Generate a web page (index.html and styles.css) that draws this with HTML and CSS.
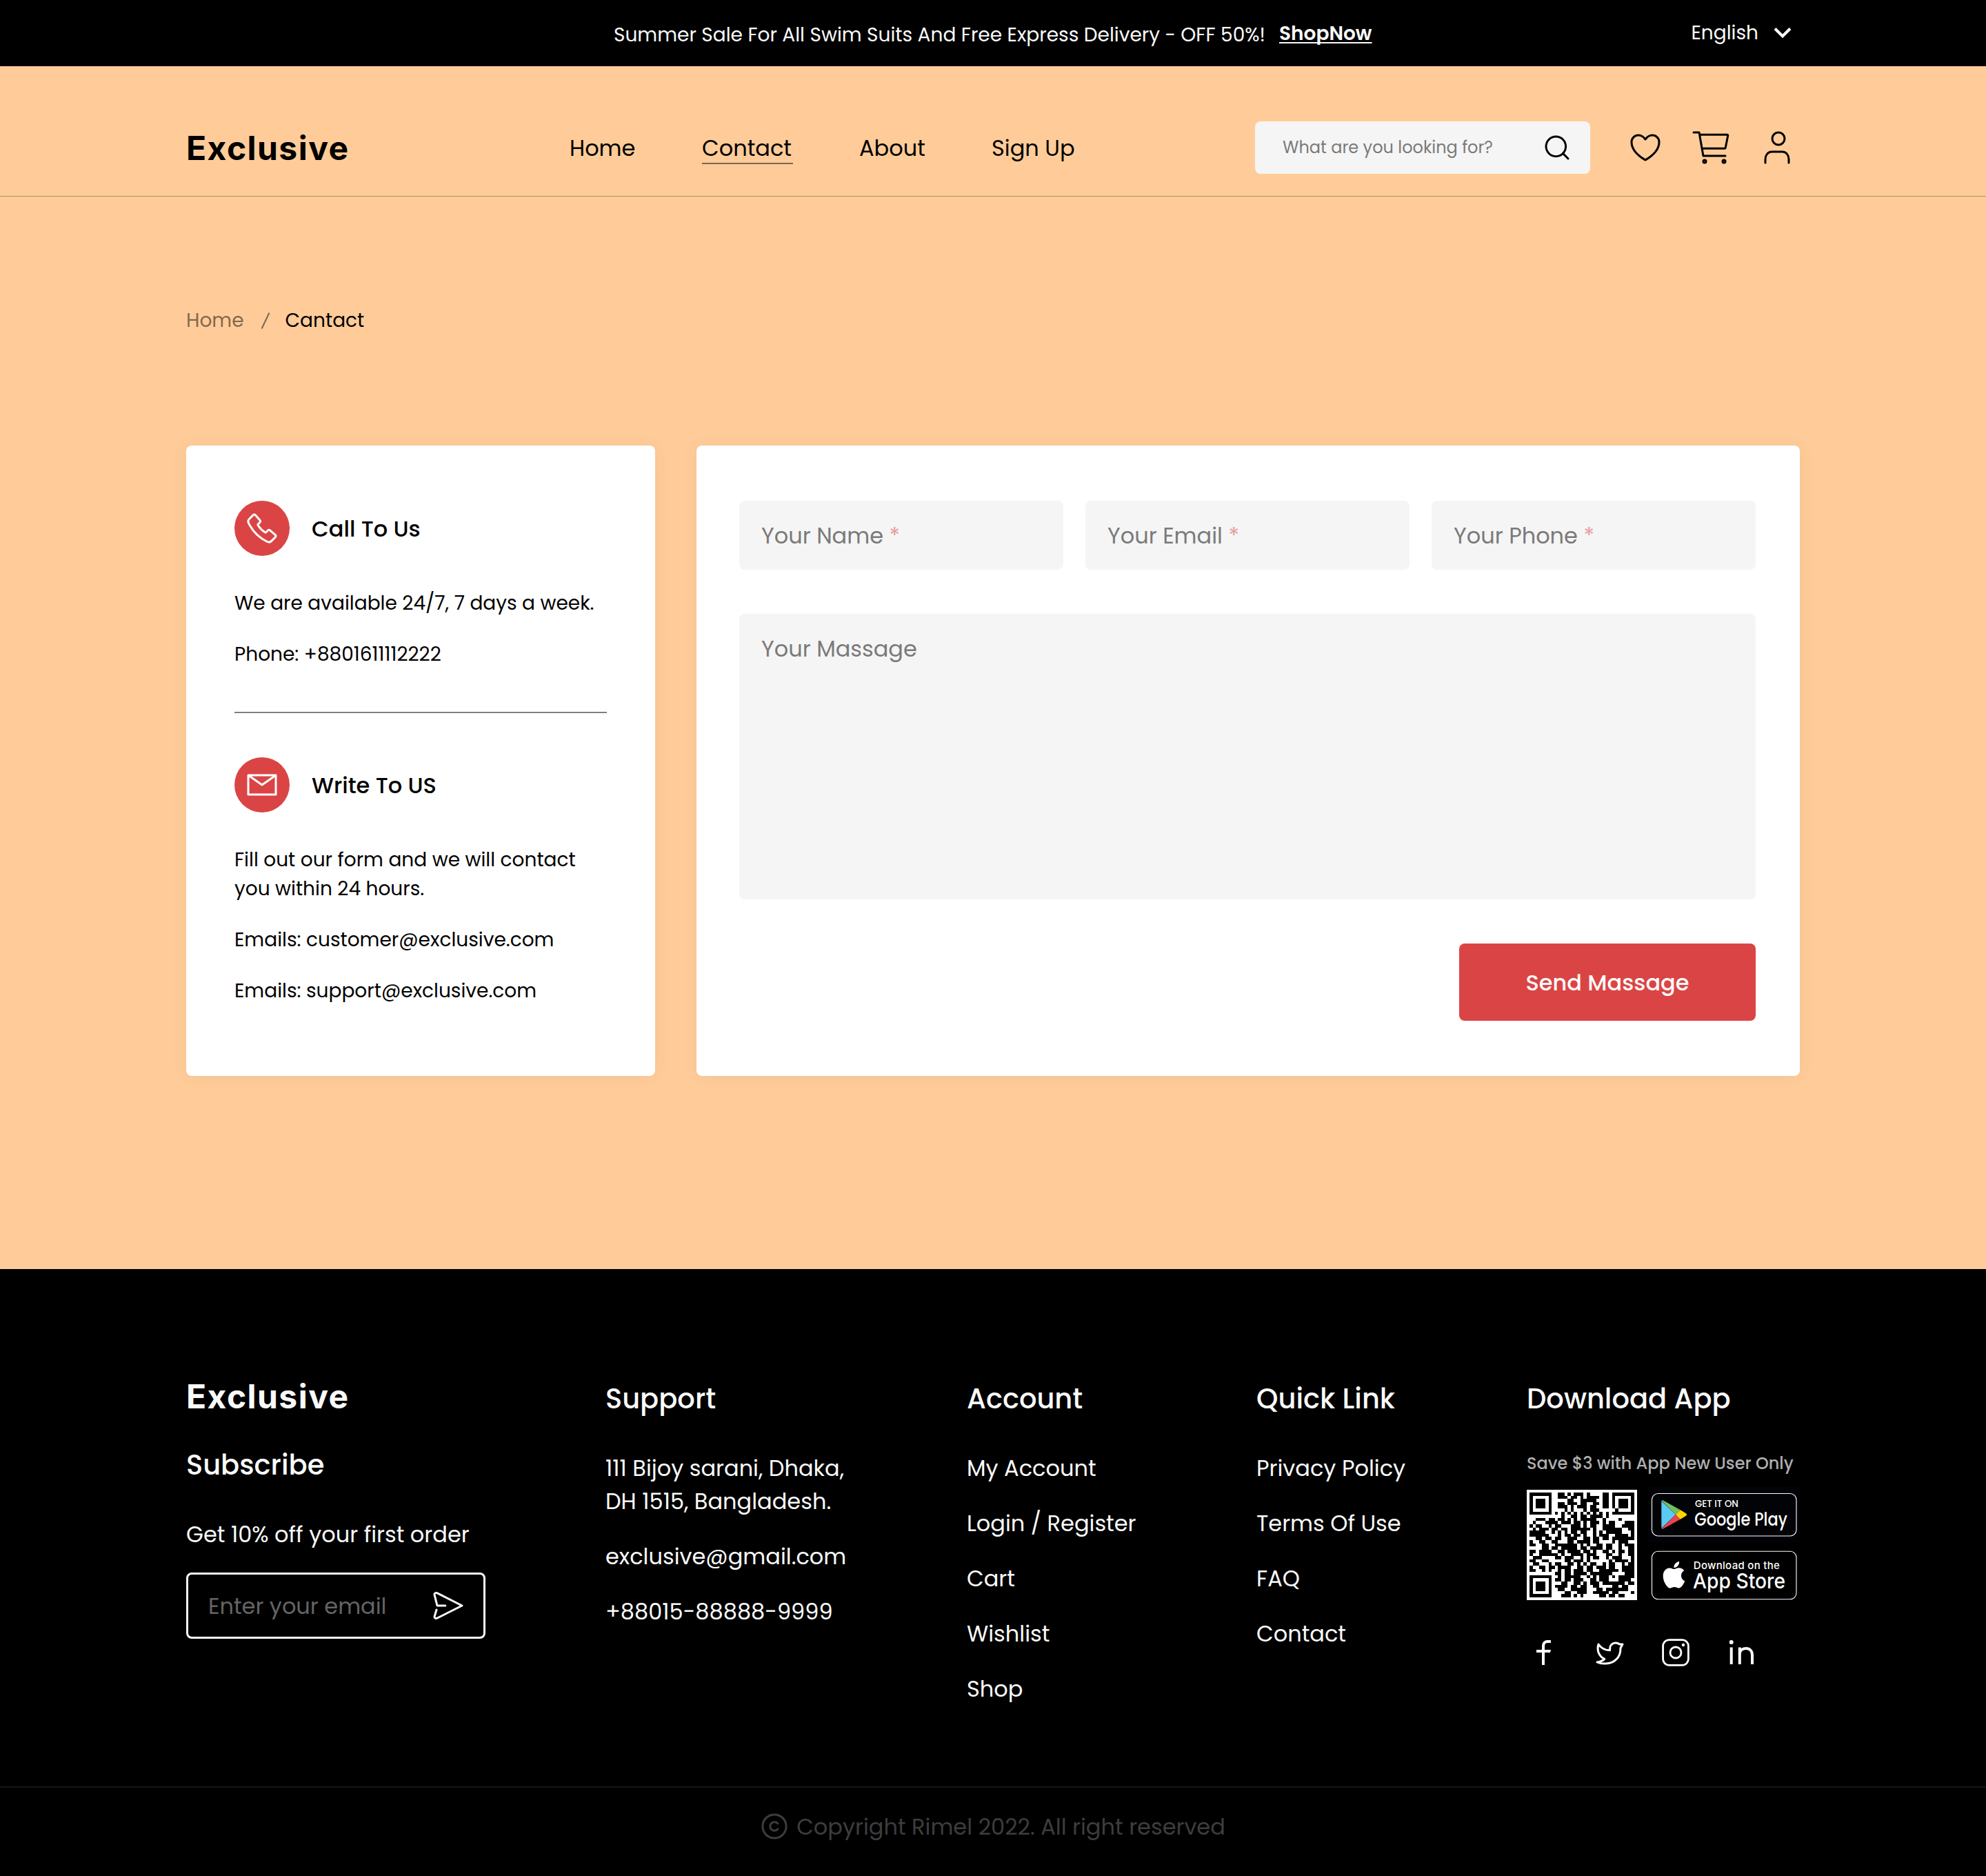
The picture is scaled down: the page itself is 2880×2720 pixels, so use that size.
FILE: index.html
```html
<!DOCTYPE html>
<html lang="en">
<head>
<meta charset="utf-8">
<title>Exclusive - Contact</title>
<link rel="stylesheet" href="styles.css">
</head>
<body>
<div class="topbar">
  <p class="promo">Summer Sale For All Swim Suits And Free Express Delivery - OFF 50%!</p>
  <a class="shop-now">ShopNow</a>
  <div class="language">
    <span>English</span>
    <svg class="icon-24" viewBox="0 0 24 24" fill="none" stroke="#fff" stroke-width="2.1"><path d="M7 8.8L12.5 14.2L18 8.8"/></svg>
  </div>
</div>

<header class="header">
  <a class="logo">Exclusive</a>
  <nav class="nav">
    <a class="t16">Home</a>
    <a class="t16 active">Contact</a>
    <a class="t16">About</a>
    <a class="t16">Sign Up</a>
  </nav>
  <div class="tools">
    <div class="search">
      <span>What are you looking for?</span>
      <svg class="icon-24" viewBox="0 0 24 24" fill="none" stroke="#000" stroke-width="1.5" stroke-linecap="round"><circle cx="11.158" cy="11.158" r="7.158"/><path d="M20 20L16.222 16.216"/></svg>
    </div>
    <div class="icons">
      <svg class="icon-32" viewBox="0 0 32 32" fill="none" stroke="#000" stroke-width="1.5" stroke-linecap="round" stroke-linejoin="round"><path d="M11 7C8.239 7 6 9.216 6 11.95C6 14.157 6.875 19.395 15.488 24.69C15.642 24.784 15.819 24.834 16 24.834C16.181 24.834 16.358 24.784 16.512 24.69C25.125 19.395 26 14.157 26 11.95C26 9.216 23.761 7 21 7C18.239 7 16 10 16 10C16 10 13.761 7 11 7Z"/></svg>
      <svg class="icon-32" viewBox="0 0 32 32" fill="none" stroke="#000" stroke-width="1.5" stroke-linecap="round" stroke-linejoin="round"><circle cx="11" cy="26" r="1"/><circle cx="25" cy="26" r="1"/><path d="M3 5H7L10 22H26"/><path d="M10 16.667H25.59C25.83 16.667 26.034 16.5 26.081 16.265L27.881 7.265C27.942 6.955 27.706 6.667 27.39 6.667H8"/></svg>
      <svg class="icon-32" viewBox="0 0 32 32" fill="none" stroke="#000" stroke-width="1.5" stroke-linecap="round" stroke-linejoin="round"><path d="M24 27V24.333C24 22.919 23.522 21.562 22.672 20.562C21.822 19.562 20.669 19 19.467 19H11.533C10.331 19 9.178 19.562 8.328 20.562C7.478 21.562 7 22.919 7 24.333V27"/><circle cx="16.5" cy="9.5" r="4.5"/></svg>
    </div>
  </div>
</header>

<main class="main">
  <div class="breadcrumb">
    <a class="crumb">Home</a>
    <svg class="slash" viewBox="0 0 14 24" stroke="#000" stroke-opacity=".5" stroke-width="2"><path d="M1.5 23.5L12.5 .5"/></svg>
    <span>Cantact</span>
  </div>

  <div class="contact">
    <section class="card info">
      <div class="info-head">
        <svg class="badge" viewBox="0 0 40 40" fill="none"><circle cx="20" cy="20" r="20" fill="#DB4444"/><path stroke="#fff" stroke-width="1.5" stroke-linecap="round" stroke-linejoin="round" d="M18.554 14.24L15.171 10.335C14.781 9.885 14.066 9.887 13.613 10.341L10.831 13.128C10.003 13.957 9.766 15.188 10.245 16.175C13.107 22.1 17.885 26.885 23.806 29.755C24.792 30.234 26.022 29.997 26.85 29.168L29.658 26.355C30.113 25.9 30.114 25.181 29.66 24.791L25.74 21.426C25.33 21.074 24.693 21.12 24.282 21.532L22.918 22.898C22.774 23.043 22.548 23.081 22.365 22.986C20.136 21.702 18.286 19.85 17.005 17.619C16.909 17.436 16.947 17.209 17.093 17.065L18.453 15.704C18.865 15.29 18.91 14.65 18.554 14.239Z"/></svg>
        <h2 class="t16 medium">Call To Us</h2>
      </div>
      <div class="info-body">
        <p>We are available 24/7, 7 days a week.</p>
        <p>Phone: +8801611112222</p>
      </div>
      <hr class="rule">
      <div class="info-head">
        <svg class="badge" viewBox="0 0 40 40" fill="none"><circle cx="20" cy="20" r="20" fill="#DB4444"/><path stroke="#fff" stroke-width="1.5" stroke-linecap="round" stroke-linejoin="round" d="M10 13L20 20L30 13M10 27H30V13H10V27Z"/></svg>
        <h2 class="t16 medium">Write To US</h2>
      </div>
      <div class="info-body">
        <p>Fill out our form and we will contact you within 24 hours.</p>
        <p>Emails: customer@exclusive.com</p>
        <p>Emails: support@exclusive.com</p>
      </div>
    </section>

    <form class="card form">
      <div class="fields">
        <label class="field"><span class="t16">Your Name <i>*</i></span></label>
        <label class="field"><span class="t16">Your Email <i>*</i></span></label>
        <label class="field"><span class="t16">Your Phone <i>*</i></span></label>
      </div>
      <label class="field message"><span class="t16">Your Massage</span></label>
      <button type="button" class="send"><span class="t16 medium">Send Massage</span></button>
    </form>
  </div>
</main>

<footer class="footer">
  <div class="columns">
    <div class="col subscribe">
      <a class="logo">Exclusive</a>
      <h3>Subscribe</h3>
      <p class="t16 offer">Get 10% off your first order</p>
      <div class="email">
        <span class="t16">Enter your email</span>
        <svg class="icon-24" viewBox="0 0 24 24" fill="none" stroke="#FAFAFA" stroke-width="1.5" stroke-linecap="round" stroke-linejoin="round"><path d="M9.912 12H4L2.023 4.135C2.01 4.089 2.003 4.042 2 3.995C1.972 3.074 2.986 2.436 3.864 2.858L22 12L3.864 21.142C2.996 21.559 1.994 20.941 2 20.035C2.003 19.954 2.017 19.874 2.042 19.797L3.5 15"/></svg>
      </div>
    </div>
    <div class="col support">
      <h3>Support</h3>
      <ul>
        <li class="t16">111 Bijoy sarani, Dhaka,<br>DH 1515, Bangladesh.</li>
        <li class="t16">exclusive@gmail.com</li>
        <li class="t16">+88015-88888-9999</li>
      </ul>
    </div>
    <div class="col account">
      <h3>Account</h3>
      <ul>
        <li class="t16">My Account</li>
        <li class="t16">Login / Register</li>
        <li class="t16">Cart</li>
        <li class="t16">Wishlist</li>
        <li class="t16">Shop</li>
      </ul>
    </div>
    <div class="col quick">
      <h3>Quick Link</h3>
      <ul>
        <li class="t16">Privacy Policy</li>
        <li class="t16">Terms Of Use</li>
        <li class="t16">FAQ</li>
        <li class="t16">Contact</li>
      </ul>
    </div>
    <div class="col download">
      <h3>Download App</h3>
      <p class="save">Save $3 with App New User Only</p>
      <div class="apps">
        <svg id="qr" class="qr" viewBox="-.87 -.87 34.74 34.74" shape-rendering="crispEdges"></svg>
        <div class="stores">
          <svg class="store" viewBox="0 0 220 80">
            <rect width="220" height="80" fill="#020306"/>
            <rect x="5.5" y="9.5" width="209.5" height="61.5" rx="9" fill="#020306" stroke="#fff" stroke-width="1.1"/>
            <path fill="#5BC9F4" d="M19.3 20V60L40 40Z"/>
            <path fill="#71BF65" d="M19.5 19.6Q20.3 18.6 22 19.5L46.8 33.3L40 40Z"/>
            <path fill="#E8434F" d="M19.5 60.4Q20.3 61.4 22 60.5L46.8 46.7L40 40Z"/>
            <path fill="#FFD400" d="M46.8 33.3L55 38.3Q57 40 55 41.7L46.8 46.7L40 40Z"/>
            <text x="68" y="29" class="small-label google" textLength="63" lengthAdjust="spacingAndGlyphs">GET IT ON</text>
            <text x="67.3" y="56.2" class="big-label google" textLength="134.5" lengthAdjust="spacingAndGlyphs">Google Play</text>
          </svg>
          <svg class="store" viewBox="0 0 220 80">
            <rect x="5.5" y="5.2" width="209.5" height="69.6" rx="9" fill="#000" stroke="#fff" stroke-width="1.1"/>
            <path fill="#fff" transform="translate(18.1 20) scale(1.612)" d="M12.152 6.896c-.948 0-2.415-1.078-3.96-1.04-2.04.027-3.91 1.183-4.961 3.014-2.117 3.675-.546 9.103 1.519 12.09 1.013 1.454 2.208 3.09 3.792 3.039 1.52-.065 2.09-.987 3.935-.987 1.831 0 2.35.987 3.96.948 1.637-.026 2.676-1.48 3.676-2.948 1.156-1.688 1.636-3.325 1.662-3.415-.039-.013-3.182-1.221-3.22-4.857-.026-3.04 2.48-4.494 2.597-4.559-1.429-2.09-3.623-2.324-4.39-2.376-2-.156-3.675 1.09-4.61 1.09zM15.53 3.83c.843-1.012 1.4-2.427 1.245-3.83-1.207.052-2.662.805-3.532 1.818-.78.896-1.454 2.338-1.273 3.714 1.338.104 2.715-.688 3.559-1.701"/>
            <text x="65.8" y="30.8" class="small-label apple" textLength="125" lengthAdjust="spacing">Download on the</text>
            <text x="65" y="58.8" class="big-label apple" textLength="134" lengthAdjust="spacingAndGlyphs">App Store</text>
          </svg>
        </div>
      </div>
      <div class="social">
        <svg class="icon-24" viewBox="0 0 24 24" fill="#fff"><path d="M13 10H17.5L17 12H13V21H11V12H7V10H11V8.128C11 6.345 11.186 5.698 11.534 5.046C11.876 4.402 12.402 3.875 13.046 3.534C13.698 3.186 14.345 3 16.128 3C16.65 3 17.108 3.05 17.5 3.15V5H16.128C14.804 5 14.401 5.078 13.99 5.298C13.686 5.46 13.46 5.686 13.298 5.99C13.078 6.401 13 6.804 13 8.128V10Z"/></svg>
        <svg class="icon-24" viewBox="0 0 24 24" fill="none" stroke="#fff" stroke-width="1.5" stroke-linejoin="round"><path d="M16.4 5C14.1 5 12.3 6.8 12.3 9V10.4C9 10.4 6 8.8 4 6C2.7 10.2 4.1 14.6 8.4 16.7C6.8 18.2 5 18.8 3 19C5 19.9 7.2 20.1 9.2 20C15.4 19.8 20 15.6 20 9.2V8.7L21.5 6H19.3C18.6 5.4 17.6 5 16.4 5Z"/></svg>
        <svg class="icon-24" viewBox="0 0 24 24" fill="none" stroke="#fff" stroke-width="1.4"><rect x="2.8" y="2.8" width="18.4" height="18.4" rx="4.4"/><circle cx="12" cy="12" r="4"/><circle cx="17.5" cy="6.5" r="1.1" fill="#fff" stroke="none"/></svg>
        <svg class="icon-24" viewBox="0 0 24 24" fill="none" stroke="#fff" stroke-width="2"><circle cx="4.35" cy="4.5" r="1.5" fill="#fff" stroke="none"/><path d="M4.35 8.3V20.5M10.4 20.5V8.3M10.4 13.4C10.4 10.6 12.3 9 14.9 9C17.7 9 19.5 10.8 19.5 13.8V20.5"/></svg>
      </div>
    </div>
  </div>
  <div class="copyright">
    <svg class="icon-20" viewBox="0 0 40 40" fill="none" stroke="#3D3D3D" stroke-width="3"><circle cx="20" cy="20" r="17.1"/><path stroke-linecap="round" d="M25 16.1A6.3 6.3 0 1 0 25 23.9"/></svg>
    <p class="t16">Copyright Rimel 2022. All right reserved</p>
  </div>
</footer>
<script src="qr.js"></script>
</body>
</html>
```

FILE: styles.css
```css
* { box-sizing: border-box; margin: 0; padding: 0; }

body {
  width: 2880px;
  background: #FFCC99;
  color: #000;
  font: 400 28px/42px Poppins, Inter, sans-serif;
}

svg { display: block; flex: none; }
ul { list-style: none; }
i { font-style: normal; }

.t16 { display: block; font-size: 32px; line-height: 48px; font-weight: 400; padding-top: 1px; margin-bottom: -1px; white-space: nowrap; }
.medium { font-weight: 500; }

.icon-20 { width: 40px; height: 40px; }
.icon-24 { width: 48px; height: 48px; }
.icon-32 { width: 64px; height: 64px; }

.logo { display: block; font: 700 48px/48px Inter, sans-serif; letter-spacing: 1.44px; padding-top: 1px; margin-bottom: -1px; }

/* top bar */
.topbar { display: flex; align-items: flex-start; height: 96px; padding: 24px 272px 0 890px; background: #000; color: #FAFAFA; }
.promo { width: 948px; padding-top: 6px; white-space: nowrap; }
.shop-now { margin-left: 17px; padding-top: 1px; font-weight: 600; line-height: 48px; text-decoration: underline 2px; text-underline-offset: 3px; text-decoration-skip-ink: none; }
.language { display: flex; align-items: center; gap: 10px; margin-left: auto; }

/* header */
.header { display: flex; align-items: center; height: 189px; padding: 80px 270px 32px; border-bottom: 1px solid rgba(0, 0, 0, .3); }
.header .logo { width: 556px; }
.nav { display: grid; grid-template-columns: 96px 132px 96px auto; column-gap: 96px; }
.nav .active { background: linear-gradient(rgba(0, 0, 0, .5), rgba(0, 0, 0, .5)) 0 46px / 100% 2px no-repeat; }
.tools { display: flex; align-items: center; gap: 48px; margin-left: auto; }
.search { display: flex; align-items: center; justify-content: space-between; width: 486px; height: 76px; padding: 0 24px 0 40px; border-radius: 8px; background: #F5F5F5; color: #7A7A7A; font-size: 24px; line-height: 36px; }
.icons { display: flex; gap: 32px; }

/* page */
.main { padding: 159px 270px 280px; }
.breadcrumb { display: flex; align-items: center; height: 42px; }
.crumb { color: rgba(0, 0, 0, .5); }
.slash { width: 14px; height: 24px; margin: 0 22px 0 24px; }
.contact { display: flex; gap: 60px; margin-top: 160px; }
.card { height: 914px; border-radius: 8px; background: #fff; box-shadow: 0 2px 26px rgba(0, 0, 0, .05); }

.info { width: 680px; padding: 80px 70px; }
.info-head { display: flex; align-items: center; gap: 32px; height: 80px; }
.badge { width: 80px; height: 80px; }
.info-body { display: flex; flex-direction: column; gap: 32px; margin-top: 48px; }
.rule { height: 2px; margin: 62px 0 64px; border: 0; background: #7F7F7F; }

.form { display: flex; flex-direction: column; gap: 64px; width: 1600px; padding: 80px 64px 80px 62px; }
.fields { display: grid; grid-template-columns: repeat(3, 1fr); gap: 32px; }
.field { display: flex; align-items: center; height: 100px; padding: 0 32px; border-radius: 8px; background: #F5F5F5; color: #7A7A7A; }
.field i { color: #E89D9D; }
.message { align-items: flex-start; height: 414px; padding-top: 26px; }
.send { display: grid; place-items: center; align-self: flex-end; width: 430px; height: 112px; border: 0; border-radius: 8px; background: #DB4444; color: #FAFAFA; font-family: inherit; }

/* footer */
.footer { height: 880px; padding-top: 160px; background: #000; color: #FAFAFA; }
.columns { display: flex; gap: 174px; height: 590px; padding-left: 270px; }
.col h3 { font-size: 40px; line-height: 56px; font-weight: 500; white-space: nowrap; }
.col ul { display: flex; flex-direction: column; gap: 32px; margin-top: 48px; }
.subscribe { width: 434px; }
.subscribe h3 { margin-top: 48px; }
.offer { margin-top: 48px; }
.email { display: flex; align-items: center; justify-content: space-between; height: 96px; margin-top: 32px; padding: 0 27px 0 29px; border: 3px solid #FAFAFA; border-radius: 8px; }
.email .t16 { color: #646464; }
.support { width: 350px; }
.account { width: 246px; }
.quick { width: 218px; }
.download { width: 396px; }
.save { margin-top: 48px; color: #AFAFAF; font-size: 24px; line-height: 36px; font-weight: 500; white-space: nowrap; }
.apps { display: flex; align-items: center; gap: 16px; margin-top: 16px; }
.qr { width: 160px; height: 160px; background: #fff; }
.stores { display: flex; flex-direction: column; gap: 8px; }
.store { width: 220px; height: 80px; overflow: visible; }
.small-label, .big-label { fill: #fff; }
.small-label.google { font: 500 14px Poppins, sans-serif; }
.big-label.google { font: 500 27px Poppins, sans-serif; }
.small-label.apple { font: 500 15px Inter, sans-serif; }
.big-label.apple { font: 500 30px Inter, sans-serif; }
.social { display: flex; gap: 48px; margin-top: 48px; }

.copyright { display: flex; align-items: center; justify-content: center; gap: 12px; height: 118px; padding-bottom: 4px; border-top: 2px solid #161616; color: #3D3D3D; }
```

FILE: qr.js
```js
// Module rows of the download code, one character per module.
const rows = [
  "#######..##.#.###.#....##.#######",
  "#.....#..###.##.#.####.##.#.....#",
  "#.###.#.....##..#####..##.#.###.#",
  "#.###.#..##.###.##..##.##.#.###.#",
  "#.###.#..###.#.###.##..##.#.###.#",
  "#.....#....#.#...#.###.....#....#",
  "#######.#.#.#.#.#.#.#.#.#.#######",
  "..........#..##.##.####.#........",
  "..###.##.##.#.#.#####..#....#....",
  ".#...####.###.##.#.###.#.##...###",
  "#.##..#.##...###.#.##..####..####",
  ".#.###.##.##.######.#..######..##",
  "#####..#.#.#.##.##..#.#.#####...#",
  "######...#.##.##.#..#.###..####.#",
  "..##.##.##..###..##.##.##.#######",
  "#..##..##...##.####.##....#.###..",
  "##..##..#######.#.#..##.##..#.###",
  "....##.##.#####.##.####.##..#..##",
  "##.####..##.####.##.#..##.#.##.##",
  "#..######.#..####.###...##..#..##",
  ".###....##.###..#.#.##..#.###...#",
  "##..##.....##.###.#......#.####.#",
  ".##...#.##..##.#.#.##..#.##..#.##",
  "#..##.##.####..##.##.###.##..####",
  "##..#.#..#.##.###.##..######.####",
  "........##.##.####.#######....###",
  "#######..#.#####..#.#.###.#.#####",
  "#.....#.##.##.###..##.###...####.",
  "#.###.#...##..##.#.###.#######.##",
  "#.###.#.####.##.##..##....##.##..",
  "#.###.#..##..#####...##.#######..",
  "#.....#....##..###..#####.##....#",
  "#######...###.#.#.....##.##.##..."
];
let d = "";
rows.forEach((row, y) => {
  [...row].forEach((c, x) => { if (c === "#") d += `M${x} ${y}h1v1h-1z`; });
});
const path = document.createElementNS("http://www.w3.org/2000/svg", "path");
path.setAttribute("d", d);
document.getElementById("qr").appendChild(path);
```
